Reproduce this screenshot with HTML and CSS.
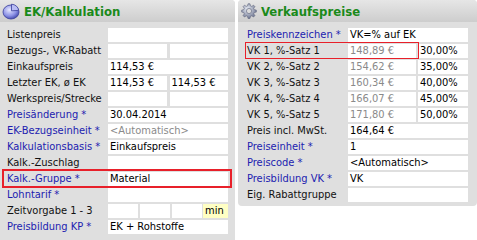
FILE: index.html
```html
<!DOCTYPE html>
<html>
<head>
<meta charset="utf-8">
<link rel="stylesheet" href="styles.css">
</head>
<body>
<div class="page">
  <section class="panel left">
    <div class="head">
      <svg class="icon" width="18" height="18" viewBox="0 0 18 18">
        <defs>
          <radialGradient id="pg" cx="40%" cy="35%" r="70%">
            <stop offset="0" stop-color="#e6e8ff"/>
            <stop offset="0.6" stop-color="#8d93e6"/>
            <stop offset="1" stop-color="#3d44a8"/>
          </radialGradient>
        </defs>
        <ellipse cx="9" cy="10" rx="8" ry="7" fill="url(#pg)" stroke="#3a3f9a" stroke-width="0.8"/>
        <path d="M9.5 2.2 L9.5 8.8 L16.6 8.4 A7.5 6.5 0 0 0 9.5 2.2 Z" fill="#b9bdf4" stroke="#3a3f9a" stroke-width="0.8"/>
      </svg>
      <span class="title">EK/Kalkulation</span>
    </div>
    <div class="body">
      <div class="row"><span class="lbl">Listenpreis</span><span class="box"></span></div>
      <div class="row"><span class="lbl">Bezugs-, VK-Rabatt</span><span class="split"><span class="box"></span><span class="box"></span></span></div>
      <div class="row"><span class="lbl">Einkaufspreis</span><span class="box">114,53 €</span></div>
      <div class="row"><span class="lbl">Letzter EK, ø EK</span><span class="split"><span class="box">114,53 €</span><span class="box">114,53 €</span></span></div>
      <div class="row"><span class="lbl">Werkspreis/Strecke</span><span class="split"><span class="box"></span><span class="box"></span></span></div>
      <div class="row"><span class="lbl req">Preisänderung *</span><span class="box">30.04.2014</span></div>
      <div class="row"><span class="lbl req">EK-Bezugseinheit *</span><span class="box grey">&lt;Automatisch&gt;</span></div>
      <div class="row"><span class="lbl req">Kalkulationsbasis *</span><span class="box">Einkaufspreis</span></div>
      <div class="row"><span class="lbl">Kalk.-Zuschlag</span><span class="box"></span></div>
      <div class="row mark"><span class="lbl req">Kalk.-Gruppe *</span><span class="box">Material</span></div>
      <div class="row"><span class="lbl req">Lohntarif *</span><span class="box"></span></div>
      <div class="row"><span class="lbl">Zeitvorgabe 1 - 3</span><span class="quad"><span class="box"></span><span class="box"></span><span class="box"></span><span class="box unit">min</span></span></div>
      <div class="row"><span class="lbl req">Preisbildung KP *</span><span class="box">EK + Rohstoffe</span></div>
    </div>
  </section>
  <section class="panel right">
    <div class="head">
      <svg class="icon gear" width="16" height="16" viewBox="0 0 16 16">
        <defs>
          <radialGradient id="gg" cx="40%" cy="35%" r="70%">
            <stop offset="0" stop-color="#e8ecf4"/>
            <stop offset="1" stop-color="#6d7590"/>
          </radialGradient>
        </defs>
        <path d="M7 0.8h2l0.4 2 1.4 0.6 1.7-1.2 1.4 1.4-1.2 1.7 0.6 1.4 2 0.4v2l-2 0.4-0.6 1.4 1.2 1.7-1.4 1.4-1.7-1.2-1.4 0.6-0.4 2h-2l-0.4-2-1.4-0.6-1.7 1.2-1.4-1.4 1.2-1.7-0.6-1.4-2-0.4v-2l2-0.4 0.6-1.4-1.2-1.700 1.4-1.4 1.7 1.2 1.4-0.6z" fill="url(#gg)" stroke="#5a6078" stroke-width="0.6"/>
        <circle cx="8" cy="8" r="2.6" fill="#dcdcdc" stroke="#5a6078" stroke-width="0.6"/>
      </svg>
      <span class="title">Verkaufspreise</span>
    </div>
    <div class="body">
      <div class="row"><span class="lbl req">Preiskennzeichen *</span><span class="box">VK=% auf EK</span></div>
      <div class="row vk mark2"><span class="lbl">VK 1, %-Satz 1</span><span class="pair"><span class="box grey">148,89 €</span><span class="box">30,00%</span></span></div>
      <div class="row vk"><span class="lbl">VK 2, %-Satz 2</span><span class="pair"><span class="box grey">154,62 €</span><span class="box">35,00%</span></span></div>
      <div class="row vk"><span class="lbl">VK 3, %-Satz 3</span><span class="pair"><span class="box grey">160,34 €</span><span class="box">40,00%</span></span></div>
      <div class="row vk"><span class="lbl">VK 4, %-Satz 4</span><span class="pair"><span class="box grey">166,07 €</span><span class="box">45,00%</span></span></div>
      <div class="row vk"><span class="lbl">VK 5, %-Satz 5</span><span class="pair"><span class="box grey">171,80 €</span><span class="box">50,00%</span></span></div>
      <div class="row"><span class="lbl">Preis incl. MwSt.</span><span class="box">164,64 €</span></div>
      <div class="row"><span class="lbl req">Preiseinheit *</span><span class="box">1</span></div>
      <div class="row"><span class="lbl req">Preiscode *</span><span class="box">&lt;Automatisch&gt;</span></div>
      <div class="row"><span class="lbl req">Preisbildung VK *</span><span class="box">VK</span></div>
      <div class="row"><span class="lbl">Eig. Rabattgruppe</span><span class="box"></span></div>
    </div>
  </section>
</div>
</body>
</html>
```
FILE: styles.css
```css
html, body {
  margin: 0;
  padding: 0;
  background: #ffffff;
}
body {
  font-family: "DejaVu Sans Condensed", "DejaVu Sans", sans-serif;
  font-size: 11px;
  color: #000;
  overflow: hidden;
}
.page {
  display: flex;
  align-items: flex-start;
  gap: 3px;
  width: 477px;
  height: 240px;
  overflow: hidden;
}
.panel {
  background: #dfdfdf;
  flex: none;
}
.panel.left {
  width: 235px;
  height: 250px;
  border-radius: 0 4px 0 0;
}
.panel.right {
  width: 239px;
  height: 206px;
  border-radius: 4px;
}
.head {
  height: 22px;
  display: flex;
  align-items: center;
  background: linear-gradient(#e6e6e6, #cdcdcd);
  border-radius: inherit;
  border-bottom-left-radius: 0;
  border-bottom-right-radius: 0;
}
.left .head { padding-left: 2px; gap: 4px; }
.right .head { padding-left: 3px; gap: 4px; }
.icon { flex: none; display: block; }
.title {
  color: #1a8a1a;
  font-weight: bold;
  font-size: 13px;
}
.body {
  display: flex;
  flex-direction: column;
  gap: 2px;
  padding-top: 6px;
}
.left .body { padding-left: 7px; padding-right: 7px; }
.right .body { padding-left: 9px; padding-right: 9px; }
.row {
  display: flex;
  height: 14px;
  line-height: 14px;
  position: relative;
}
.lbl {
  width: 101px;
  flex: none;
  white-space: nowrap;
  color: #111;
}
.lbl.req { color: #1c1cb0; }
.box {
  flex: 1;
  background: #fff;
  padding-left: 2px;
  white-space: nowrap;
  overflow: hidden;
  min-width: 0;
}
.box.grey { color: #8a8a8a; }
.split, .quad, .pair {
  flex: 1;
  display: flex;
  gap: 3px;
}
.split .box { flex: 1; }
.quad { gap: 2px; }
.quad .box { flex: none; width: 28px; }
.quad .box.unit { width: 23px; background: #ffffc4; margin-left: -1px; }
.pair { gap: 2px; }
.pair .box:first-child { flex: none; width: 66px; }
.mark::after {
  content: "";
  position: absolute;
  left: -5px;
  right: -4px;
  top: -3px;
  bottom: -2px;
  border: 2px solid #e8202a;
  pointer-events: none;
}
.mark2::after {
  content: "";
  position: absolute;
  left: -2px;
  width: 172px;
  top: -2px;
  bottom: -1px;
  border: 1px solid #e8202a;
  pointer-events: none;
}
```
